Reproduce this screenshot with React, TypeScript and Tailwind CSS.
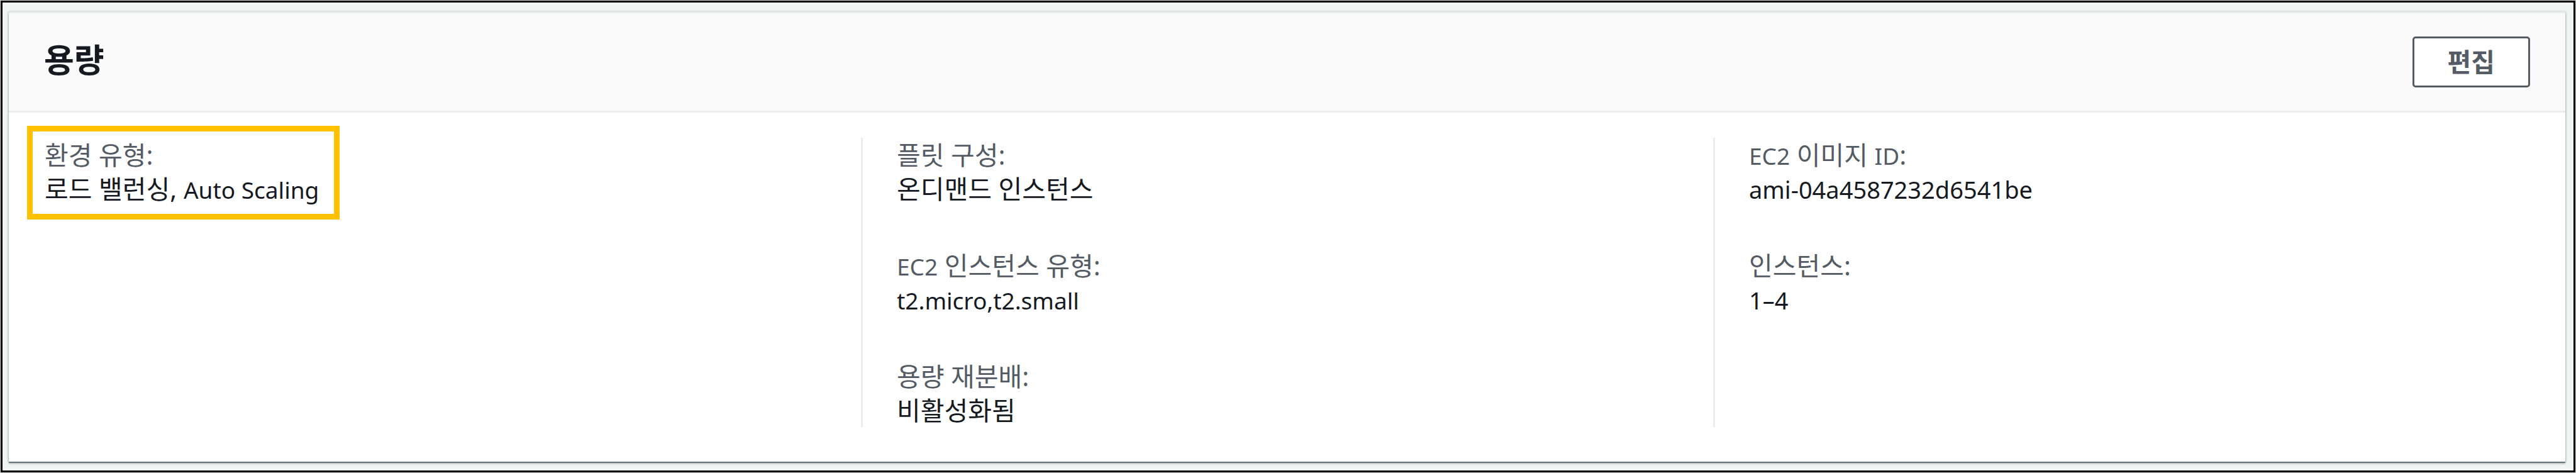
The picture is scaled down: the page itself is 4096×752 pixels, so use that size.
type Detail = {
  label: string;
  value: string;
  numeric?: boolean;
  highlighted?: boolean;
};

const columns: Detail[][] = [
  [{ label: "환경 유형:", value: "로드 밸런싱, Auto Scaling", highlighted: true }],
  [
    { label: "플릿 구성:", value: "온디맨드 인스턴스" },
    { label: "EC2 인스턴스 유형:", value: "t2.micro,t2.small" },
    { label: "용량 재분배:", value: "비활성화됨" },
  ],
  [
    { label: "EC2 이미지 ID:", value: "ami-04a4587232d6541be", numeric: true },
    { label: "인스턴스:", value: "1–4", numeric: true },
  ],
];

// Latin runs are set slightly smaller than Hangul so that both look even.
function MixedText({ text, numeric }: { text: string; numeric?: boolean }) {
  const runs = text.split(/([A-Za-z0-9][A-Za-z0-9 .,–-]*[A-Za-z0-9])/);
  return runs.map((run, index) =>
    index % 2 === 1 ? (
      <span key={index} className={numeric ? "text-[38px]" : "text-[37px]"}>
        {run}
      </span>
    ) : (
      run
    ),
  );
}

function DetailItem({ label, value, numeric, highlighted }: Detail) {
  return (
    <div className="relative w-fit text-[41px] leading-[54px]">
      {highlighted && (
        <span
          aria-hidden="true"
          className="pointer-events-none absolute -top-[19px] -right-[33px] -bottom-[22px] -left-[28px] border-[9px] border-[#ffc000]"
        />
      )}
      <dt className="h-[54px] text-[#545b64]">
        <MixedText text={label} />
      </dt>
      <dd className="h-[54px]">
        <MixedText text={value} numeric={numeric} />
      </dd>
    </div>
  );
}

export default function App() {
  return (
    <div className="flex min-h-screen bg-[#d5dbdb] p-px font-['Noto_Sans','Noto_Sans_CJK_KR',sans-serif] text-[#16191f]">
      <main className="flex grow flex-col border-[3px] border-black bg-[#f2f3f3] pt-[15px] pr-[13px] pb-[14px] pl-[10px]">
        <section
          aria-labelledby="capacity-title"
          className="grow bg-white shadow-[0_3px_3px_0_rgba(0,28,36,0.3),0_0_3px_1px_rgba(0,28,36,0.15),0_2px_0_0_#95a0a2]"
        >
          <header className="flex items-center justify-between border-t-2 border-b-[3px] border-[#eaeded] bg-[#fafafa] px-[56px] py-[37px]">
            <h2 id="capacity-title" className="pb-2 text-[52px] leading-[72px] font-bold">
              용량
            </h2>
            <button
              type="button"
              className="rounded-[5px] border-[3px] border-[#545b64] bg-white px-[53px] text-[41px] leading-[75px] font-bold text-[#545b64]"
            >
              편집
            </button>
          </header>
          <div className="grid grid-cols-3 pt-[40px] pb-[54px]">
            {columns.map((items, index) => (
              <dl
                key={index}
                className="flex flex-col gap-[68px] border-l-[3px] border-[#eaeded] pl-[54px] first:border-transparent"
              >
                {items.map((item) => (
                  <DetailItem key={item.label} {...item} />
                ))}
              </dl>
            ))}
          </div>
        </section>
      </main>
    </div>
  );
}
